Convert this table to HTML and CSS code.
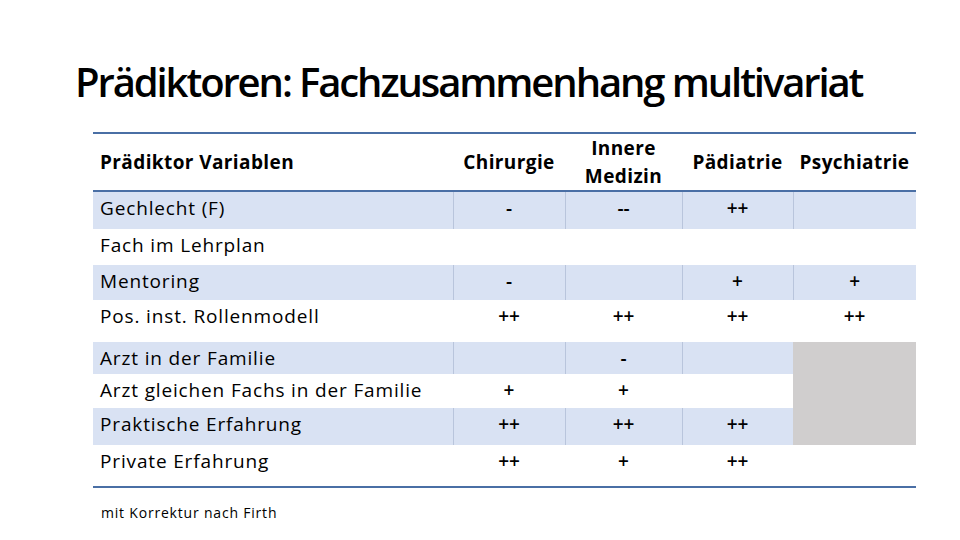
FILE: index.html
```html
<!DOCTYPE html>
<html lang="de">
<head>
<meta charset="utf-8">
<link rel="stylesheet" href="styles.css">
</head>
<body>
<div class="slide">
  <h1 class="title">Prädiktoren: Fachzusammenhang multivariat</h1>
  <table class="grid">
    <colgroup>
      <col class="c-label"><col class="c-chir"><col class="c-inn"><col class="c-pad"><col class="c-psy">
    </colgroup>
    <thead>
      <tr class="head">
        <th class="lab">Prädiktor Variablen</th>
        <th>Chirurgie</th>
        <th>Innere<br>Medizin</th>
        <th>Pädiatrie</th>
        <th>Psychiatrie</th>
      </tr>
    </thead>
    <tbody>
      <tr class="band r1"><td class="lab">Gechlecht (F)</td><td>-</td><td>--</td><td>++</td><td></td></tr>
      <tr class="r2"><td class="lab">Fach im Lehrplan</td><td></td><td></td><td></td><td></td></tr>
      <tr class="band r3"><td class="lab">Mentoring</td><td>-</td><td></td><td>+</td><td>+</td></tr>
      <tr class="r4"><td class="lab">Pos. inst. Rollenmodell</td><td>++</td><td>++</td><td>++</td><td>++</td></tr>
      <tr class="band r5"><td class="lab">Arzt in der Familie</td><td></td><td>-</td><td></td><td class="na"></td></tr>
      <tr class="r6"><td class="lab">Arzt gleichen Fachs in der Familie</td><td>+</td><td>+</td><td></td><td class="na"></td></tr>
      <tr class="band r7"><td class="lab">Praktische Erfahrung</td><td>++</td><td>++</td><td>++</td><td class="na"></td></tr>
      <tr class="r8"><td class="lab">Private Erfahrung</td><td>++</td><td>+</td><td>++</td><td></td></tr>
    </tbody>
  </table>
  <p class="note">mit Korrektur nach Firth</p>
</div>
</body>
</html>
```
FILE: styles.css
```css
html, body {
  margin: 0;
  padding: 0;
  background: #ffffff;
}
.slide {
  width: 960px;
  height: 540px;
  padding: 0 0 0 93px;
  box-sizing: border-box;
  font-family: "Open Sans", "Liberation Sans", sans-serif;
  color: #000000;
  overflow: hidden;
}
.title {
  margin: 0 0 0 -18px;
  padding-top: 56px;
  height: 76px;
  font-size: 40px;
  line-height: 52px;
  font-weight: 600;
  letter-spacing: -2.1px;
  white-space: nowrap;
}
.grid {
  border-collapse: collapse;
  table-layout: fixed;
  width: 823px;
  font-size: 19px;
  line-height: 24px;
}
.c-label { width: 360px; }
.c-chir { width: 112px; }
.c-inn { width: 117px; }
.c-pad { width: 111px; }
.c-psy { width: 123px; }
.grid th, .grid td {
  padding: 4px 0 0 0;
  text-align: center;
  vertical-align: top;
  font-weight: 600;
  white-space: nowrap;
}
.grid .lab {
  text-align: left;
  padding-left: 7px;
  font-weight: 400;
  letter-spacing: 0.85px;
}
.head th {
  height: 55px;
  padding: 0;
  vertical-align: middle;
  font-weight: 700;
  line-height: 28px;
  letter-spacing: 0.4px;
  border-top: 2px solid #4a6fa5;
  border-bottom: 2px solid #4a6fa5;
}
.head th.lab { padding-left: 7px; font-weight: 700; letter-spacing: 0.4px; }
.band td {
  background: #d9e2f3;
  border-left: 1px solid #b9c5dc;
}
.band td.lab { border-left: none; }
.grid td.na {
  background: #d0cece;
  border-left: 1px solid #d0cece;
}
.r1 td { height: 33px; }
.r2 td { height: 32px; }
.r3 td { height: 31px; }
.r4 td { height: 38px; }
.r5 td { height: 28px; }
.r6 td { height: 30px; }
.r7 td { height: 33px; }
.r8 td { height: 37px; border-bottom: 2px solid #4a6fa5; }
.note {
  margin: 16px 0 0 8px;
  font-size: 14px;
  line-height: 18px;
  letter-spacing: 0.8px;
}
```
